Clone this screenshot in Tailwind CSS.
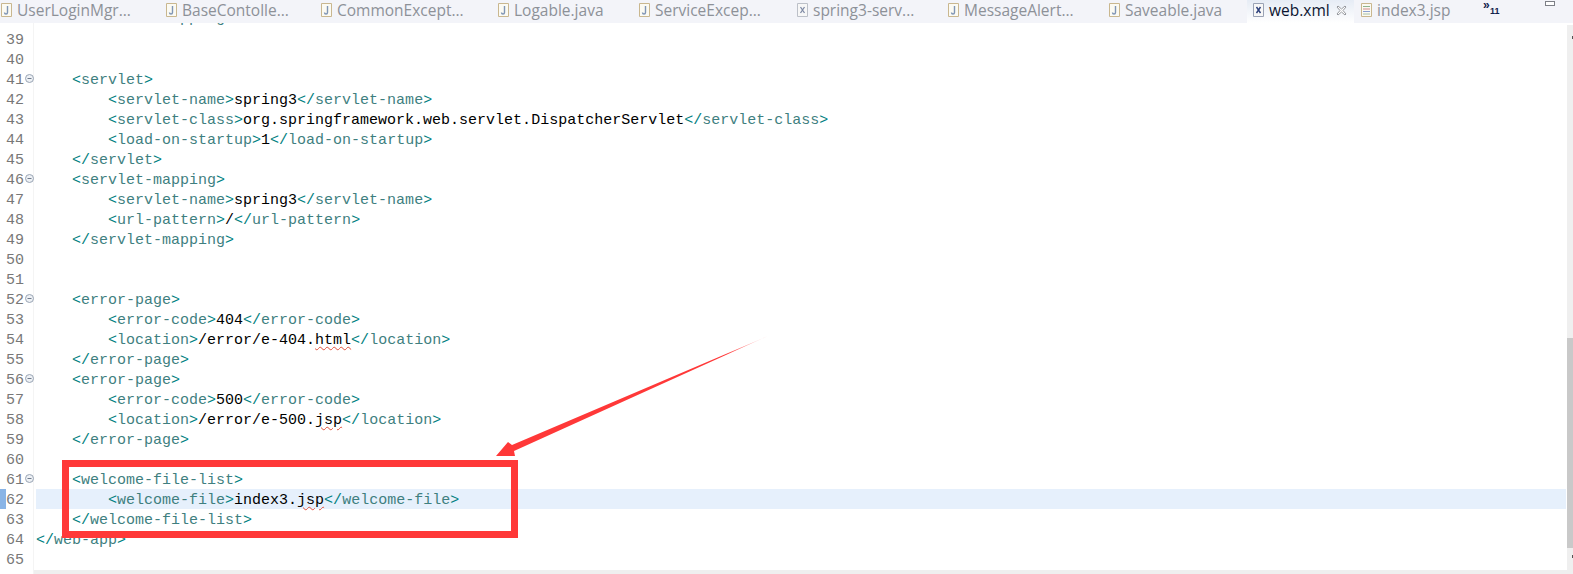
<!DOCTYPE html>
<html lang="en">
<head>
    <meta charset="UTF-8">
    <title>web.xml</title>
    <script src="https://cdn.jsdelivr.net/npm/@tailwindcss/browser@4"></script>
</head>
<body class="bg-white overflow-hidden">
<div class="relative w-[1573px] h-[574px] overflow-hidden flex flex-col">
    <!-- Tabs -->
    <div id="tabs" class="relative z-10 h-[23px] shrink-0 pl-[1px] pb-[3px] bg-[#f3f4f9] flex items-center text-[15.5px] text-[#8d9198] font-['Open_Sans',sans-serif] leading-[20px] whitespace-nowrap">
        <div class="w-[165px] flex items-center gap-[5px]"><svg class="w-[11px] h-[14px]" viewBox="0 0 11 14"><path d="M.5.5h10v13H.5z" fill="#fbfaf3" stroke="#c9b78f"/><path d="M6.500 3v6.500a1.500 1.500 0 0 1-3 0" fill="none" stroke="#7f95b5" stroke-width="1.400"/></svg>UserLoginMgr...</div>
        <div class="w-[155px] flex items-center gap-[5px]"><svg class="w-[11px] h-[14px]" viewBox="0 0 11 14"><path d="M.5.5h10v13H.5z" fill="#fbfaf3" stroke="#c9b78f"/><path d="M6.500 3v6.500a1.500 1.500 0 0 1-3 0" fill="none" stroke="#7f95b5" stroke-width="1.400"/></svg>BaseContolle...</div>
        <div class="w-[177px] flex items-center gap-[5px]"><svg class="w-[11px] h-[14px]" viewBox="0 0 11 14"><path d="M.5.5h10v13H.5z" fill="#fbfaf3" stroke="#c9b78f"/><path d="M6.500 3v6.500a1.500 1.500 0 0 1-3 0" fill="none" stroke="#7f95b5" stroke-width="1.400"/></svg>CommonExcept...</div>
        <div class="w-[141px] flex items-center gap-[5px]"><svg class="w-[11px] h-[14px]" viewBox="0 0 11 14"><path d="M.5.5h10v13H.5z" fill="#fbfaf3" stroke="#c9b78f"/><path d="M6.500 3v6.500a1.500 1.500 0 0 1-3 0" fill="none" stroke="#7f95b5" stroke-width="1.400"/></svg>Logable.java</div>
        <div class="w-[158px] flex items-center gap-[5px]"><svg class="w-[11px] h-[14px]" viewBox="0 0 11 14"><path d="M.5.5h10v13H.5z" fill="#fbfaf3" stroke="#c9b78f"/><path d="M6.500 3v6.500a1.500 1.500 0 0 1-3 0" fill="none" stroke="#7f95b5" stroke-width="1.400"/></svg>ServiceExcep...</div>
        <div class="w-[151px] flex items-center gap-[5px]"><svg class="w-[11px] h-[14px]" viewBox="0 0 11 14"><path d="M.5.5h10v13H.5z" fill="#f7f7f7" stroke="#bcc0c8"/><path d="M3.500 4l4 6M7.500 4l-4 6" stroke="#7f8aa5" stroke-width="1.300"/></svg>spring3-serv...</div>
        <div class="w-[161px] flex items-center gap-[5px]"><svg class="w-[11px] h-[14px]" viewBox="0 0 11 14"><path d="M.5.5h10v13H.5z" fill="#fbfaf3" stroke="#c9b78f"/><path d="M6.500 3v6.500a1.500 1.500 0 0 1-3 0" fill="none" stroke="#7f95b5" stroke-width="1.400"/></svg>MessageAlert...</div>
        <div class="w-[138px] flex items-center gap-[5px]"><svg class="w-[11px] h-[14px]" viewBox="0 0 11 14"><path d="M.5.5h10v13H.5z" fill="#fbfaf3" stroke="#c9b78f"/><path d="M6.500 3v6.500a1.500 1.500 0 0 1-3 0" fill="none" stroke="#7f95b5" stroke-width="1.400"/></svg>Saveable.java</div>
        <div class="w-[107px] h-[23px] mb-[-3px] pl-[6px] pb-[3px] flex items-center gap-[5px] text-[#0b1430] bg-gradient-to-b from-[#e6ecf5] to-white"><svg class="w-[11px] h-[14px]" viewBox="0 0 11 14"><path d="M.5.5h10v13H.5z" fill="#f7f7f7" stroke="#9aa3b5"/><path d="M3.500 4l4 6M7.500 4l-4 6" stroke="#2b3f7a" stroke-width="1.400"/></svg><span class="w-[59px]">web.xml</span><svg class="w-[11px] h-[11px] ml-[3px]" viewBox="0 0 11 11"><path d="M2 1l3.500 3 3.500-3 1 1-3 3.500 3 3.500-1 1-3.500-3-3.500 3-1-1 3-3.500-3-3.500z" fill="#fff" stroke="#7d8087" stroke-width=".8"/></svg></div>
        <div class="w-[129px] pl-[7px] flex items-center gap-[5px]"><svg class="w-[11px] h-[14px]" viewBox="0 0 11 14"><path d="M.5.5h10v13H.5z" fill="#fbfaf3" stroke="#c9b78f"/><path d="M2 3.500h7" stroke="#8fb38f"/><path d="M2 6h7" stroke="#d08a8a"/><path d="M2 8.500h7" stroke="#8a9fd0"/><path d="M2 11h7" stroke="#a8c0a8"/></svg>index3.jsp</div>
        <div class="relative w-[30px] h-[23px] mb-[-3px] text-[#10204a] font-['Liberation_Sans',sans-serif] font-bold"><span class="absolute left-0 top-[-5px] text-[12px]">»</span><span class="absolute left-[7px] top-[1px] text-[9px]">11</span></div>
        <div class="absolute left-[1545px] top-[1px] w-[10px] h-[5px] border border-[#7d8087] bg-white"></div>
    </div>

    <!-- Editor -->
    <div class="flex-1 relative font-['Liberation_Mono',monospace] text-[15px] leading-[24px] text-[#3f7f7f]">
        <div class="absolute left-[33px] top-0 bottom-0 w-px bg-[#f4f4f4]"></div>
        <div id="code" class="absolute left-0 top-[-14px] w-[1566px]"></div>
    </div>

    <!-- Fold markers -->
    <svg class="absolute left-[25px] top-[74px] w-[9px] h-[9px]" viewBox="0 0 9 9"><circle cx="4.500" cy="4.500" r="4" fill="#eef1f5" stroke="#9aa5b5"/><path d="M2.500 4.500h4" stroke="#6f7b8c"/></svg>
    <svg class="absolute left-[25px] top-[174px] w-[9px] h-[9px]" viewBox="0 0 9 9"><circle cx="4.500" cy="4.500" r="4" fill="#eef1f5" stroke="#9aa5b5"/><path d="M2.500 4.500h4" stroke="#6f7b8c"/></svg>
    <svg class="absolute left-[25px] top-[294px] w-[9px] h-[9px]" viewBox="0 0 9 9"><circle cx="4.500" cy="4.500" r="4" fill="#eef1f5" stroke="#9aa5b5"/><path d="M2.500 4.500h4" stroke="#6f7b8c"/></svg>
    <svg class="absolute left-[25px] top-[374px] w-[9px] h-[9px]" viewBox="0 0 9 9"><circle cx="4.500" cy="4.500" r="4" fill="#eef1f5" stroke="#9aa5b5"/><path d="M2.500 4.500h4" stroke="#6f7b8c"/></svg>
    <svg class="absolute left-[25px] top-[474px] w-[9px] h-[9px]" viewBox="0 0 9 9"><circle cx="4.500" cy="4.500" r="4" fill="#eef1f5" stroke="#9aa5b5"/><path d="M2.500 4.500h4" stroke="#6f7b8c"/></svg>

    <!-- Scrollbars -->
    <div class="absolute left-[1567px] top-[25px] w-[6px] h-[545px] bg-[#efefef]"></div>
    <div class="absolute left-[1567px] top-[338px] w-[6px] h-[210px] bg-[#c9c9c9]"></div>
    <div class="absolute left-[1572px] top-[36px] w-px h-[3px] bg-[#555]"></div>
    <div class="absolute left-[1572px] top-[555px] w-px h-[3px] bg-[#555]"></div>
    <div class="absolute left-[34px] top-[570px] w-[1539px] h-[4px] bg-[#efefef]"></div>
    <div class="absolute left-0 top-[489px] w-[6px] h-[20px] bg-[#3b82d6]/60"></div>

    <!-- Annotation -->
    <div class="absolute left-[62px] top-[460px] w-[456px] h-[78px] border-[7px] border-[#ff3838]"></div>
    <svg class="absolute left-0 top-0 pointer-events-none" width="1573" height="574" viewBox="0 0 1573 574">
        <defs><linearGradient id="fade" x1="0" x2="1" y1="0" y2="0"><stop offset=".85" stop-color="#ff3838"/><stop offset="1" stop-color="#ff3838" stop-opacity=".15"/></linearGradient></defs>
        <path d="M768 336L512 445L508 442L496 456L515 456L514 451z" fill="url(#fade)"/>
    </svg>
</div>
<script>
    // [line number, indent, open tag, text, squiggled text, close tag]
    const lines = [
        [38, 4, '', '', '', '/servlet-mapping'],
        [39], [40],
        [41, 4, 'servlet'],
        [42, 8, 'servlet-name', 'spring3', '', '/servlet-name'],
        [43, 8, 'servlet-class', 'org.springframework.web.servlet.DispatcherServlet', '', '/servlet-class'],
        [44, 8, 'load-on-startup', '1', '', '/load-on-startup'],
        [45, 4, '/servlet'],
        [46, 4, 'servlet-mapping'],
        [47, 8, 'servlet-name', 'spring3', '', '/servlet-name'],
        [48, 8, 'url-pattern', '/', '', '/url-pattern'],
        [49, 4, '/servlet-mapping'],
        [50], [51],
        [52, 4, 'error-page'],
        [53, 8, 'error-code', '404', '', '/error-code'],
        [54, 8, 'location', '/error/e-404.', 'html', '/location'],
        [55, 4, '/error-page'],
        [56, 4, 'error-page'],
        [57, 8, 'error-code', '500', '', '/error-code'],
        [58, 8, 'location', '/error/e-500.', 'jsp', '/location'],
        [59, 4, '/error-page'],
        [60],
        [61, 4, 'welcome-file-list'],
        [62, 8, 'welcome-file', 'index3.', 'jsp', '/welcome-file'],
        [63, 4, '/welcome-file-list'],
        [64, 0, '/web-app'],
        [65],
    ];

    const tag = (name) => {
        if (!name) return '';
        const slash = name.startsWith('/');
        return `<span class="text-[#008080]">&lt;${slash ? '/' : ''}</span>${slash ? name.slice(1) : name}<span class="text-[#008080]">&gt;</span>`;
    };

    document.getElementById('code').innerHTML = lines.map(([n, indent = 0, open, text = '', squiggle = '', close]) => {
        const bad = squiggle ? `<span class="underline decoration-wavy decoration-1 decoration-[#e0513c] underline-offset-2">${squiggle}</span>` : '';
        let row = 'flex-1 whitespace-pre';
        if (n === 62) row = 'flex-1 bg-[#e6f0fc] whitespace-pre';
        // line 38 sits mostly behind the tab bar, only its descenders show
        if (n === 38) row = 'flex-1 whitespace-pre -translate-y-[2px]';
        return `<div class="flex h-[20px]"><span class="w-[36px] pl-[6px] text-[#787878]">${n === 38 ? '' : n}</span><span class="${row}">${' '.repeat(indent)}${tag(open)}<span class="text-black">${text}${bad}</span>${tag(close)}</span></div>`;
    }).join('');
</script>
</body>
</html>
